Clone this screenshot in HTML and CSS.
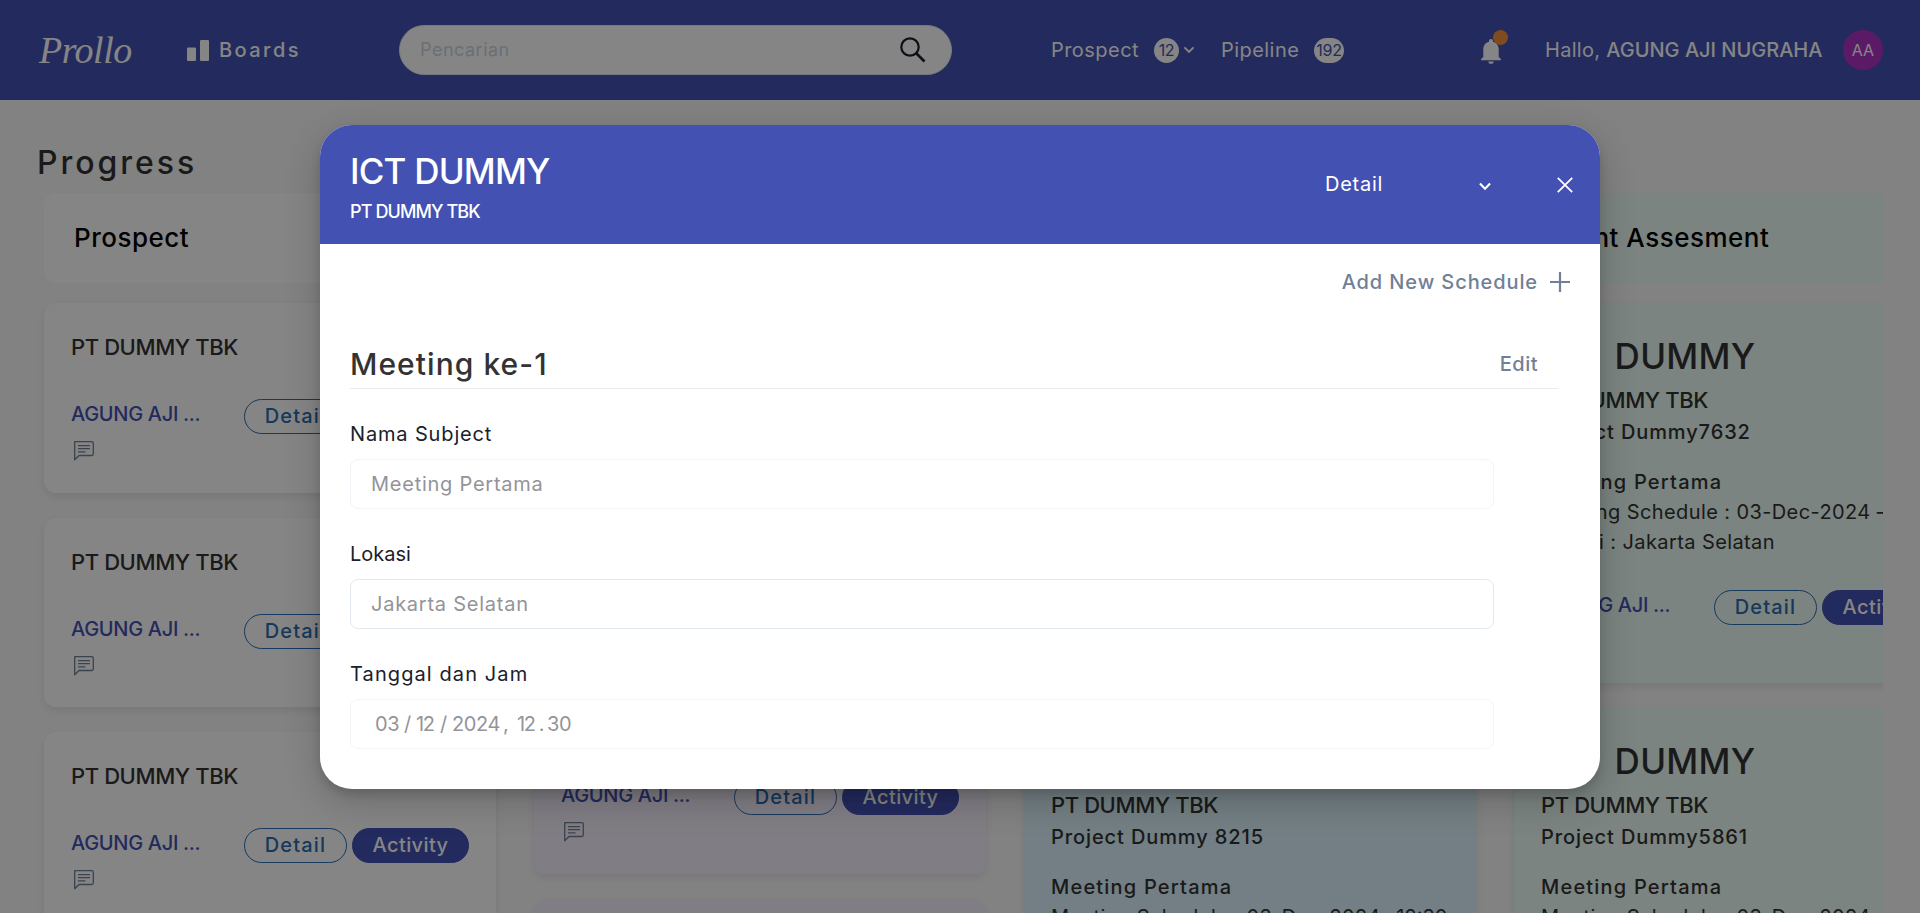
FILE: index.html
```html
<!DOCTYPE html>
<html lang="id">
<head>
<meta charset="utf-8">
<title>Prollo - Boards</title>
<link rel="stylesheet" href="styles.css">
</head>
<body>
<svg class="sprite" aria-hidden="true">
  <symbol id="note" viewBox="0 0 20 20"><path d="M.7.7H17.8a1.5 1.5 0 0 1 1.5 1.5V13a1.5 1.5 0 0 1-1.5 1.5H5L.7 18.8Z M4 4.6H16 M4 7.7H16 M4 10.8H11.5" fill="none" stroke="currentColor" stroke-width="1.3" stroke-linejoin="round"/></symbol>
  <symbol id="chevron" viewBox="0 0 12 8"><path d="M1.5 1.3 6 5.9l4.500-4.600" fill="none" stroke="currentColor" stroke-width="1.9"/></symbol>
</svg>

<header class="topbar">
  <div class="logo">Prollo</div>
  <a class="boards">
    <svg width="22" height="21" viewBox="0 0 22 21"><rect x="0" y="7.500" width="9" height="13.500" rx="1.200"/><rect x="13" y="0" width="9" height="21" rx="1.200"/></svg>
    <span>Boards</span>
  </a>
  <div class="search">
    <span>Pencarian</span>
    <svg width="26" height="26" viewBox="0 0 26 26"><circle cx="10" cy="10" r="8.700" fill="none" stroke="currentColor" stroke-width="2.200"/><path d="m16 16 8.500 8.500" stroke="currentColor" stroke-width="2.600"/></svg>
  </div>
  <a class="nav nav-prospect">Prospect</a><span class="count">12</span>
  <svg class="nav-arrow" width="12" height="8"><use href="#chevron"/></svg>
  <a class="nav nav-pipeline">Pipeline</a><span class="count count-wide">192</span>
  <div class="bell">
    <svg width="20" height="25" viewBox="0 0 20 25"><path d="M10 0c1.200 0 2 .9 2 2v.8c3.500.9 5.700 3.900 5.700 7.400V18l2.300 2v1.200H0V20l2.300-2v-7.800c0-3.500 2.200-6.500 5.700-7.400V2c0-1.100.8-2 2-2ZM7.300 22.500h5.400a2.700 2.300 0 0 1-5.400 0Z" fill="currentColor"/></svg>
    <i class="dot"></i>
  </div>
  <div class="hello">Hallo, <b>AGUNG AJI NUGRAHA</b></div>
  <div class="avatar">AA</div>
</header>

<main class="page">
  <h1 class="page-title">Progress</h1>
  <div class="board">
    <section class="column white">
      <h2 class="column-head">Prospect</h2>
      <article class="card"><h4>PT DUMMY TBK</h4><div class="row"><span class="owner">AGUNG AJI ...</span><span class="btn outline">Detail</span><span class="btn solid">Activity</span></div><svg class="note"><use href="#note"/></svg></article>
      <article class="card"><h4>PT DUMMY TBK</h4><div class="row"><span class="owner">AGUNG AJI ...</span><span class="btn outline">Detail</span><span class="btn solid">Activity</span></div><svg class="note"><use href="#note"/></svg></article>
      <article class="card"><h4>PT DUMMY TBK</h4><div class="row"><span class="owner">AGUNG AJI ...</span><span class="btn outline">Detail</span><span class="btn solid">Activity</span></div><svg class="note"><use href="#note"/></svg></article>
    </section>
    <section class="column purple">
      <div class="column-head"></div>
      <article class="card medium"></article>
      <article class="card"><h4>PT DUMMY TBK</h4><div class="row"><span class="owner">AGUNG AJI ...</span><span class="btn outline">Detail</span><span class="btn solid">Activity</span></div><svg class="note"><use href="#note"/></svg></article>
      <article class="card"></article>
    </section>
    <section class="column blue">
      <div class="column-head"></div>
      <article class="card tall"></article>
      <article class="card tall"><h3>ICT DUMMY</h3><h4>PT DUMMY TBK</h4><p class="project">Project Dummy 8215</p><p class="meeting">Meeting Pertama</p><p class="info">Meeting Schedule : 03-Dec-2024 - <span class="time">12:30</span></p></article>
    </section>
    <section class="column green">
      <h2 class="column-head">Client Assesment</h2>
      <article class="card tall"><h3>ICT DUMMY</h3><h4>PT DUMMY TBK</h4><p class="project">Project Dummy7632</p><p class="meeting">Meeting Pertama</p><p class="info">Meeting Schedule : 03-Dec-2024 –</p><p class="info">Lokasi : Jakarta Selatan</p><div class="row"><span class="owner">AGUNG AJI ...</span><span class="btn outline">Detail</span><span class="btn solid">Activity</span></div></article>
      <article class="card tall"><h3>ICT DUMMY</h3><h4>PT DUMMY TBK</h4><p class="project">Project Dummy5861</p><p class="meeting">Meeting Pertama</p><p class="info">Meeting Schedule : 03-Dec-2024 –</p></article>
    </section>
  </div>
</main>

<div class="overlay">
  <div class="modal">
    <div class="modal-head">
      <div class="modal-titles">
        <div class="modal-title">ICT DUMMY</div>
        <div class="modal-sub">PT DUMMY TBK</div>
      </div>
      <div class="select"><span>Detail</span><svg width="14" height="9"><use href="#chevron"/></svg></div>
      <svg class="close" width="16" height="16" viewBox="0 0 16 16"><path d="M.8.8 15.200 15.200M15.200.8.8 15.200" stroke="currentColor" stroke-width="1.800"/></svg>
    </div>
    <div class="modal-body">
      <div class="add"><span>Add New Schedule</span><svg width="20" height="20" viewBox="0 0 20 20"><path d="M10 0V20M0 10H20" stroke="currentColor" stroke-width="2.200"/></svg></div>
      <div class="meeting-head"><span class="meeting-title">Meeting ke-1</span><span class="edit">Edit</span></div>
      <div class="field"><label>Nama Subject</label><div class="input">Meeting Pertama</div></div>
      <div class="field"><label class="lokasi">Lokasi</label><div class="input strong">Jakarta Selatan</div></div>
      <div class="field"><label class="tanggal">Tanggal dan Jam</label><div class="input date"><span class="part">03</span><span class="slash">/</span><span class="narrow">12</span><span class="slash">/</span><span class="year">2024</span><span class="comma">,</span><span class="narrow">12</span><span class="sep">.</span><span class="part">30</span></div></div>
    </div>
  </div>
</div>
</body>
</html>
```
FILE: styles.css
```css
* { box-sizing: border-box; margin: 0; padding: 0; }
body { width: 1920px; height: 913px; overflow: hidden; background: #fafafa; font: 400 20px/30px Inter, "Open Sans", sans-serif; color: #333; white-space: nowrap; }
.sprite { position: absolute; width: 0; height: 0; }
svg { flex: none; display: block; }
h1, h2, h3, h4 { font-weight: 500; }

/* top bar */
.topbar { display: flex; align-items: center; height: 100px; padding: 0 37px 0 39px; background: #4351b3; color: #fff; }
.logo { width: 148px; font: italic 400 38px/50px "Liberation Serif", serif; letter-spacing: -.5px; }
.boards { display: flex; align-items: center; gap: 10px; width: 212px; font-weight: 500; letter-spacing: 2.450px; }
.boards svg { fill: #fff; }
.search { display: flex; align-items: center; justify-content: space-between; width: 553px; height: 50px; padding: 0 25px 0 20px; border: 1px solid #e2e8f0; border-radius: 25px; background: #fff; color: #cbd5e0; font-size: 18px; letter-spacing: .5px; }
.search svg { color: #1a202c; }
.nav { letter-spacing: .45px; }
.nav-prospect { width: 103px; margin-left: 99px; }
.nav-pipeline { width: 93px; margin-left: 26px; }
.count { width: 25px; height: 25px; margin-top: 1px; border-radius: 13px; background: #fff; color: #4351b3; font-size: 16px; line-height: 25px; text-align: center; letter-spacing: -.3px; }
.count-wide { width: 30px; }
.nav-arrow { margin-left: 4px; }
.bell { position: relative; margin: 3px 0 0 137px; }
.dot { position: absolute; left: 12px; top: -9px; width: 15px; height: 15px; border-radius: 50%; background: #f6903b; }
.hello { width: 298px; margin-left: 44px; letter-spacing: .3px; }
.hello b { font-weight: 500; letter-spacing: 0; }
.avatar { width: 40px; height: 40px; border-radius: 50%; background: #ae32c4; font-size: 16px; line-height: 40px; text-align: center; }

/* board */
.page-title { padding: 40px 0 0 37px; height: 93px; font-size: 32px; line-height: 45px; letter-spacing: 2.950px; }
.board { display: grid; grid-template-columns: repeat(4, 452px); column-gap: 38px; width: 1846px; height: 720px; margin-left: 37px; padding-left: 7px; overflow: hidden; }
.column { display: flex; flex-direction: column; gap: 25px; }
.column-head { flex: none; height: 90px; margin-bottom: -5px; padding-left: 30px; border-radius: 12px; background: var(--tone); color: #000; font-size: 26px; line-height: 89px; letter-spacing: .5px; }
.white { --tone: #fff; }
.purple { --tone: #f7f0fd; }
.blue { --tone: #dcf3fe; }
.green { --tone: #ecfdf5; }
.card { flex: none; height: 189.5px; padding: 29px 27px 0; border-radius: 12px; background: var(--tone); box-shadow: 0 4px 10px rgba(0, 0, 0, .09); }
.card.medium { height: 356px; }
.card.tall { height: 380px; }
.card h4 { font-size: 22px; letter-spacing: -.4px; }
.card .row { display: flex; margin-top: 37px; }
.owner { width: 173px; color: #4351b3; font-weight: 500; letter-spacing: -.3px; }
.btn { height: 35px; border-radius: 18px; line-height: 33px; border: 1px solid #2b6cb0; font-weight: 500; text-align: center; color: #2b6cb0; }
.outline { width: 103px; letter-spacing: 1.200px; }
.solid { width: 117px; margin-left: 5px; border-color: #4351b3; background: #4351b3; color: #fff; letter-spacing: .4px; }
.note { width: 20px; height: 20px; margin: 7px 0 0 3px; color: #718096; }
.card h3 { height: 56px; font-size: 35px; line-height: 49px; letter-spacing: .3px; word-spacing: 5px; }
.tall h4 { height: 28px; line-height: 24px; }
.project { height: 48px; line-height: 32px; font-weight: 500; letter-spacing: .9px; }
.meeting { height: 30px; line-height: 36px; font-weight: 500; letter-spacing: 1.200px; }
.info { height: 30px; line-height: 36px; letter-spacing: .4px; }
.time { margin-left: -6px; letter-spacing: 0; }
.tall .row { margin-top: 36px; }

/* modal */
.overlay { position: absolute; inset: 0; padding-top: 125px; background: rgba(0, 0, 0, .48); }
.modal { width: 1280px; height: 664px; margin: 0 auto; border-radius: 32px; overflow: hidden; background: #fff; box-shadow: 0 5px 10px rgba(0, 0, 0, .12), 0 12px 36px rgba(0, 0, 0, .2); }
.modal-head { display: flex; height: 119px; padding-left: 30px; background: #4351b3; color: #fff; }
.modal-titles { width: 975px; padding-top: 22px; font-weight: 500; }
.modal-title { height: 49px; font-size: 35px; line-height: 49px; letter-spacing: -.8px; }
.modal-sub { font-size: 18px; line-height: 31px; letter-spacing: -.9px; }
.select { display: flex; align-items: center; justify-content: space-between; width: 167px; height: 118px; letter-spacing: .75px; }
.select svg { margin: 4px 0 0; }
.close { margin: 52px 0 0 65px; }
.modal-body { padding: 22px 42px 0 30px; }
.add { display: flex; align-items: center; justify-content: flex-end; gap: 12px; margin-right: -12px; color: #718096; font-weight: 500; letter-spacing: .9px; }
.add span { line-height: 32px; }
.meeting-head { display: flex; justify-content: space-between; height: 91px; padding: 45px 20px 0 0; border-bottom: 1px solid #e9ebee; line-height: 42px; }
.meeting-title { font-size: 30px; font-weight: 500; letter-spacing: 1.050px; }
.edit { line-height: 42px; color: #718096; font-weight: 500; letter-spacing: .5px; }
.field { width: 1144px; height: 120px; padding-top: 30px; }
.field label { display: block; height: 40px; color: #1a202c; letter-spacing: .85px; }
.field .lokasi { letter-spacing: 0; }
.field .tanggal { letter-spacing: 1.100px; }
.input { height: 50px; padding-left: 20px; border: 1px solid #f1f4f8; border-radius: 8px; background: #fff; color: #939499; line-height: 48px; letter-spacing: .75px; }
.strong { border-color: #e2e8f0; }
.date { display: flex; padding-left: 24px; border-color: #f3f4f5; letter-spacing: -.4px; }
.date .part { width: 24px; }
.date .slash { width: 17px; text-align: center; }
.date .narrow { width: 19px; letter-spacing: -1.500px; }
.date .year { width: 51px; }
.date .comma { width: 14px; }
.date .sep { width: 11px; text-align: center; }
```
